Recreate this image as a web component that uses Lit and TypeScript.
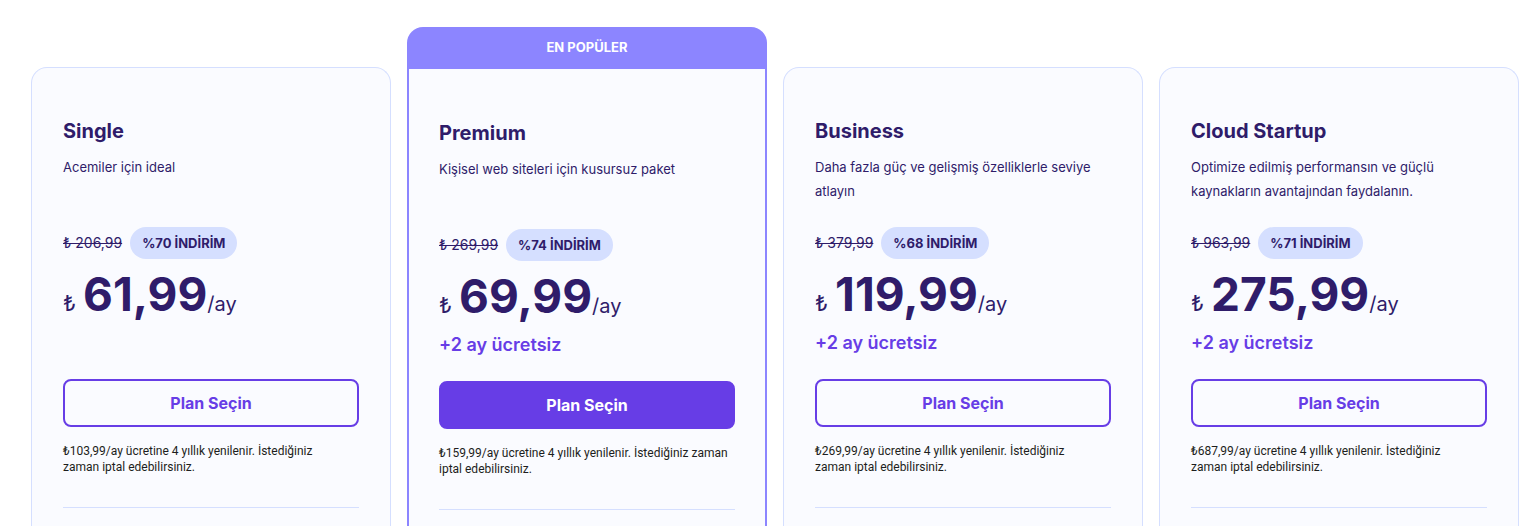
import { LitElement, css, html, nothing } from "lit";
import { customElement, property } from "lit/decorators.js";
import { classMap } from "lit/directives/class-map.js";

interface Plan {
  name: string;
  summary: string;
  oldPrice: string;
  discount: string;
  price: string;
  bonus?: string;
  renewal: string;
  popular?: boolean;
}

const PLANS: Plan[] = [
  {
    name: "Single",
    summary: "Acemiler için ideal",
    oldPrice: "206,99",
    discount: "%70 İNDİRİM",
    price: "61,99",
    renewal: "103,99",
  },
  {
    name: "Premium",
    summary: "Kişisel web siteleri için kusursuz paket",
    oldPrice: "269,99",
    discount: "%74 İNDİRİM",
    price: "69,99",
    bonus: "+2 ay ücretsiz",
    renewal: "159,99",
    popular: true,
  },
  {
    name: "Business",
    summary: "Daha fazla güç ve gelişmiş özelliklerle seviye atlayın",
    oldPrice: "379,99",
    discount: "%68 İNDİRİM",
    price: "119,99",
    bonus: "+2 ay ücretsiz",
    renewal: "269,99",
  },
  {
    name: "Cloud Startup",
    summary: "Optimize edilmiş performansın ve güçlü kaynakların avantajından faydalanın.",
    oldPrice: "963,99",
    discount: "%71 İNDİRİM",
    price: "275,99",
    bonus: "+2 ay ücretsiz",
    renewal: "687,99",
  },
];

@customElement("plan-card")
export class PlanCard extends LitElement {
  @property({ attribute: false }) plan!: Plan;

  static styles = css`
    :host {
      display: flex;
      flex-direction: column;
      min-width: 0;
    }
    .banner {
      box-sizing: border-box;
      height: 42px;
      padding: 10px 0 12px;
      border-radius: 16px 16px 0 0;
      background: #8c85ff;
      color: #fff;
      font-size: 13px;
      font-weight: 700;
      line-height: 20px;
      text-align: center;
    }
    .card {
      flex: 1;
      box-sizing: border-box;
      margin-top: 40px;
      padding: 47px 31px 16px;
      border: 1px solid #d5dfff;
      border-bottom: 0;
      border-radius: 16px 16px 0 0;
      background: #fafbff;
    }
    .card.popular {
      margin-top: 0;
      padding: 48px 30px 16px;
      border: 2px solid #8c85ff;
      border-width: 0 2px;
      border-radius: 0;
    }
    .name {
      margin: 0 0 8px;
      font-size: 20px;
      font-weight: 700;
      line-height: 32px;
    }
    .summary {
      min-height: 48px;
      margin: 0 0 24px;
      font-size: 13px;
      line-height: 24px;
    }
    .offer {
      display: flex;
      align-items: center;
      gap: 8px;
    }
    .old {
      font-size: 14px;
      line-height: 24px;
    }
    .discount {
      padding: 4px 12px;
      border-radius: 16px;
      background: #d5dfff;
      font-size: 13px;
      font-weight: 700;
      line-height: 24px;
    }
    .price {
      display: flex;
      align-items: baseline;
      margin: 3px 0 5px;
      font-size: 20px;
      line-height: 24px;
    }
    .currency {
      margin-right: 7px;
      font-size: 22px;
    }
    .amount {
      font-size: 46px;
      font-weight: 700;
      line-height: 64px;
    }
    .bonus {
      min-height: 24px;
      margin: 0 0 24px;
      color: #673de6;
      font-size: 18px;
      font-weight: 600;
      line-height: 24px;
    }
    .choose {
      display: block;
      width: 100%;
      height: 48px;
      padding: 0;
      border: 2px solid #673de6;
      border-radius: 8px;
      background: transparent;
      color: #673de6;
      font: inherit;
      font-size: 16px;
      font-weight: 700;
      cursor: pointer;
    }
    .popular .choose {
      background: #673de6;
      color: #fff;
    }
    .renewal {
      margin: 16px 0 32px;
      padding-right: 16px;
      color: #1d1e20;
      font-family: Roboto, sans-serif;
      font-size: 12px;
      line-height: 16px;
    }
    .popular .renewal {
      padding-right: 0;
    }
    .divider {
      height: 1px;
      margin: 0;
      border: 0;
      background: #d5dfff;
    }
  `;

  render() {
    const p = this.plan;
    const renewal = `₺${p.renewal}/ay ücretine 4 yıllık yenilenir. İstediğiniz zaman iptal edebilirsiniz.`;
    return html`
      ${p.popular ? html`<div class="banner">EN POPÜLER</div>` : nothing}
      <article class=${classMap({ card: true, popular: !!p.popular })}>
        <h2 class="name">${p.name}</h2>
        <p class="summary">${p.summary}</p>
        <div class="offer">
          <s class="old">${`₺ ${p.oldPrice}`}</s>
          <span class="discount">${p.discount}</span>
        </div>
        <div class="price">
          <span class="currency">₺</span><span class="amount">${p.price}</span><span>/ay</span>
        </div>
        <p class="bonus">${p.bonus ?? nothing}</p>
        <button class="choose" type="button">Plan Seçin</button>
        <p class="renewal">${renewal}</p>
        <hr class="divider" />
      </article>
    `;
  }
}

@customElement("app-root")
export class AppRoot extends LitElement {
  static styles = css`
    :host {
      display: block;
      background: #fff;
      color: #2f1c6a;
      font-family: Inter, sans-serif;
    }
    .plans {
      display: grid;
      grid-template-columns: repeat(4, minmax(0, 1fr));
      gap: 16px;
      box-sizing: border-box;
      min-height: 100vh;
      padding: 27px 16px 0 31px;
    }
    @media (max-width: 1100px) {
      .plans {
        grid-template-columns: repeat(auto-fit, minmax(300px, 1fr));
      }
    }
  `;

  render() {
    return html`
      <main class="plans">
        ${PLANS.map((plan) => html`<plan-card .plan=${plan}></plan-card>`)}
      </main>
    `;
  }
}
